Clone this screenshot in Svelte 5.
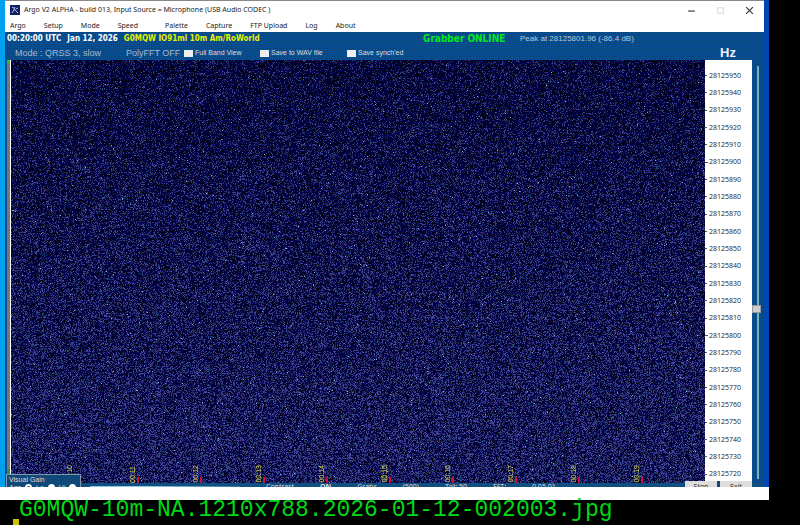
<script lang="ts">
  import { onMount } from "svelte";

  const title = "Argo V2 ALPHA - build 013, Input Source = Microphone (USB Audio CODEC )";
  const menus = [
    ["Argo", "Setup", "Mode", "Speed"],
    ["Palette", "Capture", "FTP Upload", "Log", "About"],
  ];
  const options = ["Full Band View", "Save to WAV file", "Save synch'ed"];
  const gains = ["Agc", "Lo", "Hi"];
  const times = ["00:10", "00:11", "00:12", "00:13", "00:14", "00:15", "00:16", "00:17", "00:18", "00:19"];

  const freqs: number[] = [];
  for (let hz = 28125950; hz >= 28125720; hz -= 10) {
    freqs.push(hz);
  }

  let level = $state(41);
  let gain = $state("Agc");
  let canvas: HTMLCanvasElement;

  // Small seeded generator, so the waterfall is the same on every load
  function makeRandom(seed: number) {
    return () => {
      seed = (seed + 0x6d2b79f5) | 0;
      let t = Math.imul(seed ^ (seed >>> 15), 1 | seed);
      t = (t + Math.imul(t ^ (t >>> 7), 61 | t)) ^ t;
      return ((t ^ (t >>> 14)) >>> 0) / 4294967296;
    };
  }

  function pick(r: number, b: number) {
    // b is how strong the band noise is, from 0 at the top to 1 at the bottom
    if (r < 0.001 + b * 0.002) return [128, 176, 208];
    if (r < 0.004 + b * 0.01) return [96, 96, 184];
    if (r < 0.04 + b * 0.05) return [24, 64, 104];
    if (r < 0.1 + b * 0.22) return [64, 64, 152];
    if (r < 0.24 + b * 0.3) return [32, 32, 96];
    if (r < 0.66 + b * 0.2) return [0, 0, 72];
    if (r < 0.8 + b * 0.12) return [0, 0, 32];
    return [0, 0, 8];
  }

  function draw() {
    const w = canvas.clientWidth;
    const h = canvas.clientHeight;
    if (!w || !h) return;
    canvas.width = w;
    canvas.height = h;
    const ctx = canvas.getContext("2d");
    const image = ctx.createImageData(w, h);
    const random = makeRandom(28125);
    for (let y = 0; y < h; y++) {
      const b = y / h;
      for (let x = 0; x < w; x++) {
        const [red, green, blue] = pick(random(), b);
        const i = (y * w + x) * 4;
        image.data[i] = red;
        image.data[i + 1] = green;
        image.data[i + 2] = blue;
        image.data[i + 3] = 255;
      }
    }
    ctx.putImageData(image, 0, 0);
  }

  onMount(() => {
    const observer = new ResizeObserver(draw);
    observer.observe(canvas);
    return () => observer.disconnect();
  });
</script>

<div class="page">
  <div class="desktop">
    <main class="window">
      <header class="titlebar">
        <svg class="logo" viewBox="0 0 10 10" aria-hidden="true">
          <rect width="10" height="10" fill="#102060" />
          <path d="M2 2l2 1 1 2 3 3M5 2l-1 3-2 3M6 4l2-1" stroke="#b0c0f0" fill="none" />
        </svg>
        <h1>{title}</h1>
        <div class="controls">
          <button aria-label="Minimize">
            <svg viewBox="0 0 8 8"><path d="M1 4.5h6" stroke="#333" /></svg>
          </button>
          <button aria-label="Maximize" disabled>
            <svg viewBox="0 0 8 8"><path d="M1.5 1.5h5v5h-5z" stroke="#ddd" fill="none" /></svg>
          </button>
          <button aria-label="Close">
            <svg viewBox="0 0 8 8"><path d="M1 1l6 6M7 1l-6 6" stroke="#333" /></svg>
          </button>
        </div>
      </header>

      <nav class="menubar">
        {#each menus as group}
          <div class="menugroup">
            {#each group as item}
              <button>{item}</button>
            {/each}
          </div>
        {/each}
      </nav>

      <section class="info">
        <div class="station">
          <time>00:20:00 UTC</time>
          <time>Jan 12, 2026</time>
          <span class="call">G0MQW IO91ml 10m Am/RoWorld</span>
        </div>
        <strong class="online">Grabber ONLINE</strong>
        <span class="peak">Peak at 28125801.96 (-86.4 dB)</span>
      </section>

      <section class="modes">
        <span class="mode">Mode : QRSS 3, slow</span>
        <span class="mode">PolyFFT OFF</span>
        {#each options as option}
          <label class="option"><input type="checkbox" />{option}</label>
        {/each}
        <span class="unit">Hz</span>
      </section>

      <section class="work">
        <div class="meter"></div>
        <div class="plot">
          <canvas bind:this={canvas}></canvas>
          <div class="times">
            {#each times as time}
              <div class="time"><span>{time}</span><i></i></div>
            {/each}
          </div>
        </div>
        <ol class="scale">
          {#each freqs as hz}
            <li class:major={hz % 100 === 0}>{hz}</li>
          {/each}
        </ol>
        <input class="level" type="range" aria-label="Level" bind:value={level} />
      </section>

      <footer class="status">
        <span class="progress"></span>
        <span>Contrast</span>
        <b>ON</b>
        <span>Grabs</span>
        <span>(500)</span>
        <span>Tot: 50</span>
        <span>FFT:</span>
        <span>0.05.01</span>
      </footer>

      <fieldset class="gain">
        <legend>Visual Gain</legend>
        {#each gains as name}
          <label>{name}<input type="radio" name="gain" value={name} bind:group={gain} /></label>
        {/each}
      </fieldset>

      <div class="actions">
        <button>Stop</button>
        <button>Exit</button>
      </div>
    </main>
  </div>
  <p class="caption">G0MQW-10m-NA.1210x788.2026-01-12-002003.jpg</p>
</div>

<style>
  :global(body) {
    margin: 0;
    background: #000;
  }

  .page {
    display: flex;
    flex-direction: column;
    height: 100vh;
    min-height: 300px;
    overflow: hidden;
    font-family: "Open Sans", "Noto Sans", sans-serif;
    font-size: 7px;
    line-height: 10px;
  }

  button {
    margin: 0;
    padding: 0;
    border: 0;
    background: none;
    font: inherit;
    color: inherit;
  }

  input {
    appearance: none;
    margin: 0;
  }

  .desktop {
    flex: 1;
    min-height: 0;
    margin-right: 31px;
    padding: 0 5px;
    background: linear-gradient(90deg, #00a0f0 5px, #0048b0 5px);
    border-bottom: 13px solid #fff;
  }

  .window {
    position: relative;
    display: flex;
    flex-direction: column;
    height: 100%;
    overflow: hidden;
    background:
      repeating-linear-gradient(90deg, rgba(32, 48, 64, 0.3) 0 1px, transparent 1px 2px),
      repeating-linear-gradient(rgba(32, 48, 64, 0.3) 0 1px, transparent 1px 2px),
      #08549c;
    color: #ddd;
  }

  .titlebar {
    display: flex;
    align-items: center;
    height: 18px;
    padding: 0 10px 0 5px;
    border-top: 1px solid #888;
    background: #fff;
    color: #222;
  }

  .logo {
    width: 10px;
    height: 10px;
    margin-right: 4px;
  }

  h1 {
    flex: 1;
    margin: 0;
    font: 7px/10px "Noto Sans", sans-serif;
    white-space: nowrap;
  }

  .controls {
    display: flex;
    gap: 20px;
  }

  .controls button,
  .controls svg {
    display: block;
    width: 9px;
    height: 9px;
  }

  .menubar {
    display: flex;
    gap: 27px;
    height: 13px;
    padding-left: 5px;
    background: #fff;
    font: 7px/14px "Noto Sans", sans-serif;
    color: #222;
  }

  .menugroup {
    display: flex;
    gap: 18px;
  }

  .info,
  .modes {
    align-items: center;
    height: 14px;
    white-space: nowrap;
  }

  .info {
    display: flex;
  }

  .station {
    display: flex;
    gap: 6px;
    width: 416px;
    padding-left: 2px;
    font: bold 8px/10px "DejaVu Sans Condensed", "DejaVu Sans", sans-serif;
    color: #fff;
  }

  .call {
    color: #e8f000;
  }

  .online {
    width: 97px;
    font: bold 10px/12px "DejaVu Sans Condensed", "DejaVu Sans", sans-serif;
    color: #00e820;
  }

  .peak {
    font: 8px/10px "Liberation Sans", Arial, sans-serif;
    color: #b8c8d8;
  }

  .modes {
    display: grid;
    grid-template-columns: 111px 58px 76px 87px auto 1fr;
    padding: 0 28px 0 10px;
    font-family: "Liberation Sans", Arial, sans-serif;
  }

  .mode {
    font-size: 9px;
    color: #a8b8c8;
  }

  .option {
    display: flex;
    align-items: center;
    gap: 2px;
  }

  .option input {
    width: 9px;
    height: 7px;
    background: #eee;
  }

  .unit {
    font-size: 13px;
    font-weight: 700;
    text-align: right;
    color: #eef;
  }

  .work {
    display: flex;
    flex: 1;
    min-height: 0;
  }

  .meter {
    width: 3px;
    margin-left: 2px;
    border-right: 1px solid #fff;
    background: linear-gradient(#20d020 3px, #777 3px calc(100% - 14px), #309040 0);
  }

  .plot {
    position: relative;
    flex: 1;
    min-width: 0;
    overflow: hidden;
  }

  canvas {
    display: block;
    width: 100%;
    height: 100%;
  }

  .times {
    position: absolute;
    bottom: 0;
    left: 55px;
    display: flex;
  }

  .time {
    display: flex;
    align-items: flex-end;
    width: 63px;
    font: 7px/8px "Liberation Sans", Arial, sans-serif;
    color: #d8d840;
  }

  .time span {
    writing-mode: vertical-rl;
    transform: rotate(180deg);
  }

  .time i {
    width: 2px;
    height: 6px;
    background: #d01030;
  }

  .scale {
    display: flex;
    flex-direction: column;
    width: 47px;
    margin: 0;
    padding: 7px 0 0;
    box-sizing: border-box;
    list-style: none;
    background: #fff;
    color: #222;
  }

  .scale li {
    display: flex;
    flex: 1;
    align-items: center;
    gap: 2px;
  }

  .scale li::before {
    content: "";
    width: 2px;
    height: 1px;
    background: #555;
  }

  .scale .major::before {
    width: 3px;
    margin-right: -1px;
  }

  .level {
    width: 9px;
    height: auto;
    margin: 6px 3px 4px 0;
    writing-mode: vertical-lr;
    direction: rtl;
    background: linear-gradient(90deg, transparent 5px, #70b8b8 5px 7px, transparent 7px);
  }

  .level::-webkit-slider-thumb {
    appearance: none;
    width: 9px;
    height: 8px;
    border: 1px solid #999;
    background: #ccc;
  }

  .status {
    display: flex;
    gap: 26px;
    height: 4px;
    padding-left: 85px;
    background: #105080;
    line-height: 8px;
    overflow: hidden;
    white-space: nowrap;
  }

  .progress {
    width: 150px;
    height: 1px;
    margin-top: 3px;
    background: linear-gradient(90deg, #90c8e0 40%, #3078a0);
  }

  /* The panel and the buttons run past the lower edge of the window */
  .gain {
    position: absolute;
    bottom: -6px;
    left: 1px;
    display: flex;
    gap: 4px;
    width: 75px;
    height: 19px;
    margin: 0;
    padding: 8px 0 0 2px;
    box-sizing: border-box;
    border: 1px solid #8098b0;
    background: #104878;
    font: 7px/9px "Liberation Sans", Arial, sans-serif;
  }

  .gain legend {
    float: left;
    position: absolute;
    top: 0;
    padding: 0;
  }

  .gain label {
    display: flex;
    align-items: center;
    gap: 4px;
  }

  .gain input {
    width: 7px;
    height: 7px;
    border-radius: 50%;
    background: #fff;
  }

  .gain input:checked {
    background: #222;
    border: 2px solid #fff;
    box-sizing: border-box;
  }

  .actions {
    position: absolute;
    right: 12px;
    bottom: -6px;
    display: flex;
    gap: 3px;
    padding-left: 1px;
    background: #104878;
  }

  .actions button {
    width: 32px;
    height: 12px;
    background: #ddd;
    color: #222;
  }

  .caption {
    height: 25px;
    margin: 0;
    padding-left: 19px;
    box-sizing: border-box;
    background: linear-gradient(#d0c000, #d0c000) 13px 19px / 6px 6px no-repeat #000;
    font: 23px/20px "Liberation Mono", monospace;
    color: #00d818;
    white-space: nowrap;
  }
</style>
